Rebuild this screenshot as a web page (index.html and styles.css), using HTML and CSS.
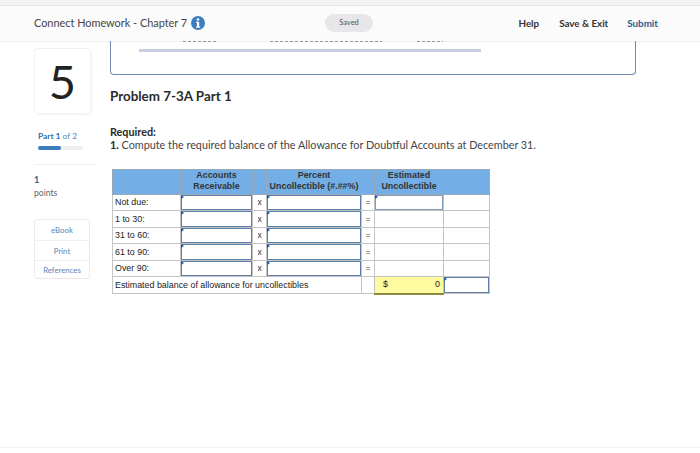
FILE: index.html
```html
<!DOCTYPE html>
<html lang="en">
<head>
<meta charset="utf-8">
<title>Connect Homework - Chapter 7</title>
<link rel="stylesheet" href="styles.css">
</head>
<body>
<div class="topstrip"></div>
<header class="bar">
  <div class="bar-left">
    <span class="title">Connect Homework - Chapter 7</span>
    <svg class="info" width="14" height="14" viewBox="0 0 14 14"><circle cx="7" cy="7" r="7" fill="#3d7cbf"/><circle cx="7" cy="3.5" r="1.3" fill="#fff"/><path d="M5 5.8h3.2v4.7h1v1.3H5v-1.3h1V7.1H5z" fill="#fff"/></svg>
  </div>
  <div class="saved">Saved</div>
  <nav class="actions">
    <span class="act act-help">Help</span>
    <span class="act act-save">Save &amp; Exit</span>
    <span class="act act-submit">Submit</span>
  </nav>
</header>
<div class="layout">
  <aside class="side">
    <div class="qnum">5</div>
    <div class="part"><b>Part 1</b> of 2</div>
    <div class="progress"><div class="progress-fill"></div></div>
    <div class="divider"></div>
    <div class="pts-num">1</div>
    <div class="pts">points</div>
    <div class="tools">
      <div class="tool tool-ebook">eBook</div>
      <div class="tool">Print</div>
      <div class="tool tool-refs">References</div>
    </div>
  </aside>
  <main class="main">
    <div class="card">
      <div class="clipped"><span class="c1"></span><span class="c2"></span><span class="c3"></span></div>
      <div class="rule"></div>
    </div>
    <h1 class="heading">Problem 7-3A Part 1</h1>
    <p class="req"><b>Required:</b><br><b>1.</b> Compute the required balance of the Allowance for Doubtful Accounts at December 31.</p>
    <table class="grid">
      <colgroup>
        <col class="w-label"><col class="w-ar"><col class="w-op"><col class="w-pct"><col class="w-op2"><col class="w-est"><col class="w-extra">
      </colgroup>
      <thead>
        <tr><th></th><th>Accounts<br>Receivable</th><th></th><th>Percent<br>Uncollectible (#.##%)</th><th></th><th>Estimated<br>Uncollectible</th><th></th></tr>
      </thead>
      <tbody>
        <tr><td class="lbl">Not due:</td><td class="in"><i></i></td><td class="op">x</td><td class="in"><i></i></td><td class="op eq">=</td><td class="in thin"><i></i></td><td></td></tr>
        <tr><td class="lbl">1 to 30:</td><td class="in"><i></i></td><td class="op">x</td><td class="in"><i></i></td><td class="op eq">=</td><td></td><td></td></tr>
        <tr><td class="lbl">31 to 60:</td><td class="in"><i></i></td><td class="op">x</td><td class="in"><i></i></td><td class="op eq">=</td><td></td><td></td></tr>
        <tr><td class="lbl">61 to 90:</td><td class="in"><i></i></td><td class="op">x</td><td class="in"><i></i></td><td class="op eq">=</td><td></td><td></td></tr>
        <tr><td class="lbl">Over 90:</td><td class="in"><i></i></td><td class="op">x</td><td class="in"><i></i></td><td class="op eq">=</td><td></td><td></td></tr>
        <tr class="total"><td class="lbl" colspan="4">Estimated balance of allowance for uncollectibles</td><td></td><td class="sum"><span>$</span><span>0</span></td><td class="in"><i></i></td></tr>
      </tbody>
    </table>
  </main>
</div>
<div class="footline"></div>
</body>
</html>
```
FILE: styles.css
```css
* { box-sizing: border-box; }
html, body { margin: 0; padding: 0; }
body { width: 700px; height: 453px; overflow: hidden; background: #fff; font-family: Lato, "Liberation Sans", sans-serif; color: #333; position: relative; }
.topstrip { height: 6px; background: #f4f4f4; border-bottom: 1px solid #e6e6e6; }
.bar { height: 35px; background: #fbfbfb; display: flex; align-items: center; padding: 0 42px 2px 34px; box-shadow: 0 1px 1px #f0f0f0; }
.bar-left { display: flex; align-items: center; gap: 4px; width: 291px; }
.title { font-size: 10.9px; color: #444; }
.info { flex: none; }
.saved { width: 48px; height: 18px; border-radius: 9px; background: #e8e6e8; font-size: 7.5px; color: #555; display: flex; align-items: center; justify-content: center; }
.actions { margin-left: auto; display: flex; align-items: center; font-size: 9.8px; font-weight: 700; color: #333; }
.act-help { margin-right: 1px; }
.act-save { margin-left: 19px; }
.act-submit { margin-left: 19px; color: #2a5a8c; }
.layout { display: flex; padding-left: 34px; }
.side { width: 76px; flex: none; }
.qnum { width: 57px; height: 66px; margin-top: 7px; border: 1px solid #f0f0f0; border-radius: 4px; box-shadow: 2px 2px 0 #f8f8f8; font-weight: 400; font-size: 47px; color: #222; display: flex; align-items: center; justify-content: center; }
.part { margin: 17px 0 0 4px; font-size: 8.4px; line-height: 11px; color: #5b87b5; }
.part b { color: #2f6da8; font-weight: 700; }
.progress { width: 45px; height: 4px; margin: 4px 0 0 4px; border-radius: 2px; background: #f0f0f0; }
.progress-fill { width: 23px; height: 4px; border-radius: 2px; background: #3b7cbd; }
.divider { width: 62px; height: 1px; background: #f0f0f0; margin-top: 14px; }
.pts-num { margin-top: 9px; font-size: 9px; font-weight: 700; color: #2f5f8f; line-height: 12px; }
.pts { font-size: 8.6px; color: #666; line-height: 12px; margin-top: 1px; }
.tools { width: 56px; margin-top: 20px; border: 1px solid #eaeaea; border-radius: 3px; }
.tool { height: 20px; font-size: 7.8px; color: #5a84b8; display: flex; align-items: center; justify-content: center; border-top: 1px solid #f0f0f0; }
.tool-ebook { border-top: 0; }
.tool-refs { height: 18px; }
.main { width: 526px; }
.card { height: 34px; border: 1.5px solid #6f8cb0; border-top: 0; border-radius: 0 0 4px 4px; overflow: hidden; }
.clipped { height: 2px; margin-left: 72px; display: flex; }
.clipped span { display: block; height: 1px; background: repeating-linear-gradient(90deg, #999 0 3px, transparent 3px 5px); }
.c1 { width: 33px; margin-right: 54px; }
.c2 { width: 112px; margin-right: 35px; }
.c3 { width: 26px; }
.rule { width: 342px; height: 3px; background: #c9cfdf; margin: 6px 0 0 28px; }
.heading { margin: 13px 0 0; font-size: 13.4px; line-height: 16px; font-weight: 700; color: #2b2b2b; }
.req { margin: 21px 0 0; font-size: 10.8px; line-height: 13px; color: #444; }
.req b { font-weight: 700; color: #2b2b2b; }
.grid { table-layout: fixed; border-collapse: collapse; width: 377px; margin: 18px 0 0 2px; font-family: "Liberation Sans", Arial, sans-serif; font-size: 8.9px; color: #222; }
.w-label { width: 68px; } .w-ar { width: 72px; } .w-op { width: 14px; } .w-pct { width: 95px; } .w-op2 { width: 13px; } .w-est { width: 69px; } .w-extra { width: 46px; }
.grid th { background: #74aee6; border: 1px solid #9aa8b8; height: 24px; padding: 0 0 2px; font-weight: 700; line-height: 11px; color: #333; font-size: 8.9px; }
.grid td { border: 1px solid #c4c4c4; padding: 0 0 1px; position: relative; }
.grid tbody tr:nth-child(odd) td { height: 16px; }
.grid tbody tr:nth-child(even) td { height: 17px; }
.grid td.lbl { padding-left: 2px; }
.op { text-align: center; font-size: 8.5px; color: #333; }
.eq { color: #444; }
.in i { position: absolute; inset: 0; border: 1.5px solid #5d7fa8; display: block; }
.in i::before { content: ""; position: absolute; left: -1.5px; top: -1.5px; border-left: 3px solid #1458c4; border-top: 2.5px solid transparent; border-bottom: 2.5px solid transparent; }
.thin i { border-width: 1px; border-color: #7f9ab8; }
.grid tbody tr.total td { height: 17px; }
.grid td.sum { background: #fdfa9f; border-bottom: 2px solid #8a8a40; padding: 0 3px 1px 8px; }
.sum span:first-child { float: left; }
.sum span:last-child { float: right; }
.footline { position: absolute; left: 0; right: 0; top: 447px; height: 1px; background: #f3f3f3; }
```
